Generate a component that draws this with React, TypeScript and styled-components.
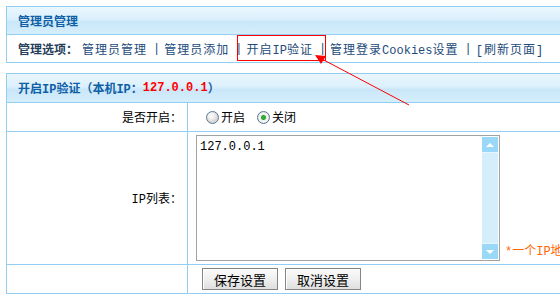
import React from 'react';
import styled, { createGlobalStyle } from 'styled-components';

const GlobalStyle = createGlobalStyle`
  html, body {
    margin: 0;
    padding: 0;
    background: #fff;
    overflow: hidden;
  }
  body {
    font-family: "Liberation Mono", "Noto Sans CJK SC", monospace;
    font-size: 12px;
    color: #000;
  }
`;

const Page = styled.div`
  position: relative;
  width: 560px;
  height: 300px;
  padding: 6px 0 0 6px;
  box-sizing: border-box;
  overflow: hidden;
`;

const Panel = styled.div<{ gap?: number }>`
  width: 600px;
  border: 1px solid #92cdf2;
  box-sizing: border-box;
  margin-bottom: ${props => props.gap ?? 0}px;
`;

const PanelHead = styled.div<{ tall?: boolean }>`
  height: ${props => props.tall ? 28 : 27}px;
  display: flex;
  align-items: center;
  padding-left: 11px;
  border-bottom: 1px solid #92cdf2;
  background: linear-gradient(to bottom, #eaf6fe 0%, #dcf0fc 45%, #c9e7f9 55%, #d6eefb 100%);
  color: #0f5fa6;
  font-weight: bold;
  white-space: nowrap;
`;

const Ip = styled.span`
  color: #ff0000;
`;

const MenuRow = styled.div`
  height: 27px;
  display: flex;
  align-items: center;
  padding-left: 11px;
  white-space: nowrap;
`;

const MenuLabel = styled.span`
  font-weight: bold;
  color: #263e5a;
  margin-right: 4px;
`;

const MenuLink = styled.a`
  color: #234b7a;
  text-decoration: none;
  letter-spacing: 1px;
  cursor: pointer;
`;

const Latin = styled.span`
  letter-spacing: 0;
`;

const Sep = styled.span`
  color: #234b7a;
  margin: 0 4px 0 6px;
`;

const FormGrid = styled.div`
  display: grid;
  grid-template-columns: 181px 1fr;
`;

const LabelCell = styled.div<{ h: number; last?: boolean }>`
  height: ${props => props.h}px;
  display: flex;
  align-items: center;
  justify-content: flex-end;
  padding-right: 5px;
  border-right: 1px solid #92cdf2;
  border-bottom: ${props => props.last ? 'none' : '1px solid #92cdf2'};
  white-space: nowrap;
`;

const FieldCell = styled.div<{ h: number; last?: boolean; pad: number }>`
  height: ${props => props.h}px;
  display: flex;
  align-items: center;
  padding-left: ${props => props.pad}px;
  border-bottom: ${props => props.last ? 'none' : '1px solid #92cdf2'};
  white-space: nowrap;
`;

const RadioGroup = styled.div`
  display: flex;
  align-items: center;
  gap: 12px;
`;

const RadioLabel = styled.label`
  display: flex;
  align-items: center;
  gap: 2px;
  cursor: pointer;
`;

const RadioDot = styled.span<{ checked?: boolean }>`
  width: 13px;
  height: 13px;
  box-sizing: border-box;
  border-radius: 50%;
  border: 1px solid #5a7896;
  background: ${props => props.checked
    ? 'radial-gradient(circle, #3fb53f 0, #2ea02e 2px, #e9f3e9 3px, #f6f6f6 4px, #dcdcdc 6px)'
    : 'radial-gradient(circle at 40% 35%, #ffffff 0, #f0f0f0 3px, #d6d6d6 6px)'};
`;

const FieldWrap = styled.div`
  display: flex;
  align-items: flex-end;
  gap: 5px;
`;

const TextBox = styled.div`
  width: 304px;
  height: 126px;
  box-sizing: border-box;
  border: 1px solid #a2a2a2;
  display: flex;
  background: #fff;
`;

const TextBody = styled.div`
  flex: 1;
  padding: 3px 3px;
  line-height: 16px;
`;

const ScrollBar = styled.div`
  width: 16px;
  margin: 1px 1px 1px 0;
  background: #d5eefb;
  display: flex;
  flex-direction: column;
  justify-content: space-between;
`;

const ScrollBtn = styled.div<{ down?: boolean }>`
  height: 15px;
  background: #9ad8f8;
  border-bottom: ${props => props.down ? 'none' : '1px solid #e6f6fe'};
  border-top: ${props => props.down ? '1px solid #e6f6fe' : 'none'};
  display: flex;
  align-items: center;
  justify-content: center;

  &::after {
    content: '';
    width: 0;
    height: 0;
    border-left: 4px solid transparent;
    border-right: 4px solid transparent;
    ${props => props.down
      ? 'border-top: 4px solid #fff;'
      : 'border-bottom: 4px solid #fff;'}
  }
`;

const Hint = styled.span`
  color: #ff6600;
  margin-bottom: 2px;
`;

const ButtonRow = styled.div`
  display: flex;
  gap: 7px;
`;

const Button = styled.button`
  width: 76px;
  height: 22px;
  padding: 0;
  border: 1px solid #858585;
  box-shadow: inset 1px 1px 0 #fff;
  background: linear-gradient(to bottom, #fbfbfb 0%, #efefef 50%, #dedede 100%);
  font-family: "Noto Sans CJK SC", sans-serif;
  font-size: 13px;
  color: #000;
  cursor: pointer;
`;

const Callout = styled.div`
  position: absolute;
  left: 237px;
  top: 35px;
  width: 89px;
  height: 26px;
  border: 1px solid #ff0000;
  box-sizing: border-box;
  pointer-events: none;
`;

const ArrowLayer = styled.svg`
  position: absolute;
  left: 0;
  top: 0;
  pointer-events: none;
`;

export default function App() {
  return (
    <>
      <GlobalStyle />
      <Page>
        <Panel gap={10}>
          <PanelHead>管理员管理</PanelHead>
          <MenuRow>
            <MenuLabel>管理选项：</MenuLabel>
            <MenuLink>管理员管理</MenuLink>
            <Sep>|</Sep>
            <MenuLink>管理员添加</MenuLink>
            <Sep>|</Sep>
            <MenuLink>开启<Latin>IP</Latin>验证</MenuLink>
            <Sep>|</Sep>
            <MenuLink>管理登录<Latin>Cookies</Latin>设置</MenuLink>
            <Sep>|</Sep>
            <MenuLink>[刷新页面]</MenuLink>
          </MenuRow>
        </Panel>

        <Panel>
          <PanelHead tall>
            开启IP验证（本机IP：<Ip>127.0.0.1</Ip>）
          </PanelHead>
          <FormGrid>
            <LabelCell h={28}>是否开启：</LabelCell>
            <FieldCell h={28} pad={18}>
              <RadioGroup>
                <RadioLabel><RadioDot />开启</RadioLabel>
                <RadioLabel><RadioDot checked />关闭</RadioLabel>
              </RadioGroup>
            </FieldCell>

            <LabelCell h={132}>IP列表：</LabelCell>
            <FieldCell h={132} pad={8}>
              <FieldWrap>
                <TextBox>
                  <TextBody>127.0.0.1</TextBody>
                  <ScrollBar>
                    <ScrollBtn />
                    <ScrollBtn down />
                  </ScrollBar>
                </TextBox>
                <Hint>*一个IP地址一行</Hint>
              </FieldWrap>
            </FieldCell>

            <LabelCell h={28} last />
            <FieldCell h={28} pad={14} last>
              <ButtonRow>
                <Button>保存设置</Button>
                <Button>取消设置</Button>
              </ButtonRow>
            </FieldCell>
          </FormGrid>
        </Panel>

        <Callout />
        <ArrowLayer width="560" height="300">
          <line x1="409" y1="105" x2="320" y2="58" stroke="#ff0000" strokeWidth="1" />
          <polygon points="315,55 326,56 321,64" fill="#ff0000" />
        </ArrowLayer>
      </Page>
    </>
  );
}
